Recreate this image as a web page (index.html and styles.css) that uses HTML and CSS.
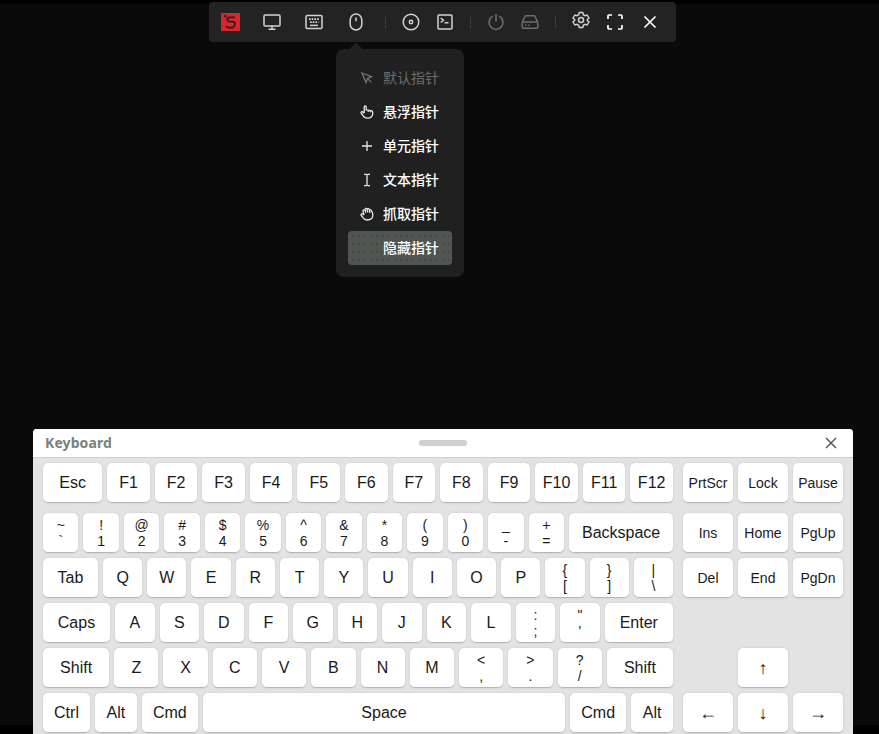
FILE: index.html
```
<!DOCTYPE html>
<html lang="zh">
<head>
<meta charset="utf-8">
<title>Keyboard</title>
<link rel="stylesheet" href="styles.css">
</head>
<body>
<div class="stage">
  <nav class="toolbar">
    <svg class="logo" viewBox="0 0 19 18"><path fill="#dc242c" d="M0 0h19v18H0z"/><path fill="none" stroke="#242424" stroke-width="1.9" d="M14 4.4H8.6Q6.4 4.4 6.4 6.3T8.6 8.6h3Q14 8.8 14 11t-2.4 3.6H7.4L5 13.4M3 2.6l2.4 1.2"/></svg>
    <svg class="ico i2" viewBox="0 0 18 18"><rect x="1" y="2" width="16" height="11" rx="1"/><path d="M9 13v3M5.5 16.2h7"/></svg>
    <svg class="ico i3" viewBox="0 0 18 18"><rect x="1" y="2.5" width="16" height="13" rx="1.2"/><path stroke-width="1.8" stroke-dasharray="1.7 1" d="M4 6.2h10.5M5 9.2h8.5"/><path d="M5 12.4h8"/></svg>
    <svg class="ico i4" viewBox="0 0 18 18"><rect x="3.2" y="1" width="11.6" height="16" rx="5.8"/><path d="M9 4.5v3.7"/></svg>
    <i class="sep s1"></i>
    <svg class="ico i5" viewBox="0 0 18 18"><circle cx="9" cy="9" r="7.8"/><circle cx="9" cy="9" r="1.7"/></svg>
    <svg class="ico i6" viewBox="0 0 18 18"><rect x="2" y="2" width="14" height="14" rx="1"/><path d="M4.7 5l2.7 2.3L4.7 9.5M8.5 9.8h4"/></svg>
    <i class="sep s2"></i>
    <svg class="ico i7 dim" viewBox="0 0 18 18"><path d="M5.8 3.2a7 7 0 1 0 6.4 0M9 1v7.5"/></svg>
    <svg class="ico i8 dim" viewBox="0 0 18 18"><path d="M1.2 9.2L4 3.5q.3-.7 1-.7h8q.7 0 1 .7l2.8 5.7M3 9h12q1.8 0 1.8 1.5V14q0 1.2-1.2 1.2H2.4Q1.2 15.2 1.2 14v-3.5Q1.2 9 3 9zM4 12.2h1.4M7 12.2h1.4"/></svg>
    <i class="sep s3"></i>
    <svg class="ico i9" viewBox="0 0 18 18"><path stroke-width="1.4" d="M7.2 1.5h3.6l.5 2.2 1.7 1 2.2-.7L17 7.1l-1.7 1.5v1L17 11l-1.8 3-2.2-.7-1.7 1-.5 2.2H7.2l-.5-2.2-1.7-1-2.2.7L1 11l1.7-1.5v-1L1 7.1 2.8 4l2.2.7 1.7-1z"/><circle cx="9" cy="9" r="2.5"/></svg>
    <svg class="ico i10 bright" viewBox="0 0 18 18"><path d="M2 6V3q0-1 1-1h3M12 2h3q1 0 1 1v3M16 12v3q0 1-1 1h-3M6 16H3q-1 0-1-1v-3"/></svg>
    <svg class="ico i11 bright" viewBox="0 0 18 18"><path d="M3.5 3.5l11 11M14.5 3.5l-11 11"/></svg>
  </nav>

  <div class="menu">
    <div class="item off"><svg class="mi" viewBox="0 0 14 14"><path d="M2 2l9.5 3.6-4 1.8L6 11.6zM7.6 7.6l3.8 3.8"/></svg><span>默认指针</span></div>
    <div class="item"><svg class="mi" viewBox="0 0 14 14"><path d="M4.2 8V2.2q0-1.2 1-1.2t1 1.2V5l4.8.6q1.8.3 1.8 1.8 0 5.8-5.2 5.8-3.3 0-4.5-2.4L1 7.8q.2-1.5 1.7-.9l1.5 1.4M8.3 5.3v1.8M10.5 5.6v1.7"/></svg><span>悬浮指针</span></div>
    <div class="item"><svg class="mi" viewBox="0 0 14 14"><path d="M2 7h10M7 2v10"/></svg><span>单元指针</span></div>
    <div class="item"><svg class="mi" viewBox="0 0 14 14"><path d="M4 1.4h2L7 2l1-.6h2M7 2v10M4 12.6h2L7 12l1 .6h2"/></svg><span>文本指针</span></div>
    <div class="item"><svg class="mi" viewBox="0 0 14 14"><path d="M4 8L3 4q0-1.3 1-1.2 1 0 1.2 1.2L5 2.5Q5.2 1 6.2 1.1q1 0 1 1.2 1.6-1.5 2.3.7 1.4-.9 1.9.8l1.2 2.4q1.3 6.6-5 6.8-3.4 0-5-2.8L1 8q0-1.6 1.6-1.2L4 8M5.2 3l.6 2.8M7.3 2.5l.5 3M9.5 3l.4 2.8"/></svg><span>抓取指针</span></div>
    <div class="item on"><i class="mi"></i><span>隐藏指针</span></div>
  </div>
</div>

<section class="panel">
  <header class="head">
    <span class="title">Keyboard</span>
    <i class="grip"></i>
    <svg class="close" viewBox="0 0 12 12"><path d="M1 1l10 10M11 1L1 11"/></svg>
  </header>
  <div class="keys">
    <div class="main">
      <div class="row fn"><b class="esc">Esc</b><b>F1</b><b>F2</b><b>F3</b><b>F4</b><b>F5</b><b>F6</b><b>F7</b><b>F8</b><b>F9</b><b>F10</b><b>F11</b><b>F12</b></div>
      <div class="row"><b class="two">~<br>`</b><b class="two">!<br>1</b><b class="two">@<br>2</b><b class="two">#<br>3</b><b class="two">$<br>4</b><b class="two">%<br>5</b><b class="two">^<br>6</b><b class="two">&amp;<br>7</b><b class="two">*<br>8</b><b class="two">(<br>9</b><b class="two">)<br>0</b><b class="two">_<br>-</b><b class="two">+<br>=</b><b class="back">Backspace</b></div>
      <div class="row"><b class="tab">Tab</b><b>Q</b><b>W</b><b>E</b><b>R</b><b>T</b><b>Y</b><b>U</b><b>I</b><b>O</b><b>P</b><b class="two">{<br>[</b><b class="two">}<br>]</b><b class="two">|<br>\</b></div>
      <div class="row"><b class="caps">Caps</b><b>A</b><b>S</b><b>D</b><b>F</b><b>G</b><b>H</b><b>J</b><b>K</b><b>L</b><b class="two">:<br>;</b><b class="two">"<br>'</b><b class="enter">Enter</b></div>
      <div class="row"><b class="shift">Shift</b><b>Z</b><b>X</b><b>C</b><b>V</b><b>B</b><b>N</b><b>M</b><b class="two">&lt;<br>,</b><b class="two">&gt;<br>.</b><b class="two">?<br>/</b><b class="shift">Shift</b></div>
      <div class="row"><b class="ctrl">Ctrl</b><b class="alt">Alt</b><b class="cmd">Cmd</b><b>Space</b><b class="cmd">Cmd</b><b class="alt">Alt</b></div>
    </div>
    <div class="side">
      <div class="row fn"><b>PrtScr</b><b>Lock</b><b>Pause</b></div>
      <div class="row"><b>Ins</b><b>Home</b><b>PgUp</b></div>
      <div class="row"><b>Del</b><b>End</b><b>PgDn</b></div>
      <div class="row"></div>
      <div class="row"><i></i><b class="arrow">↑</b><i></i></div>
      <div class="row"><b class="arrow">←</b><b class="arrow">↓</b><b class="arrow">→</b></div>
    </div>
  </div>
</section>
</body>
</html>
```
FILE: styles.css
```
* { box-sizing: border-box; }
html { background: #000; }
body {
  margin: 0;
  height: 734px;
  overflow: hidden;
  background: linear-gradient(#000 4px, #0a0a0a 4px, #0a0a0a 725px, #000 725px);
  font-family: "Liberation Sans", Arial, sans-serif;
}
.stage { height: 429px; padding-top: 2px; }

.toolbar {
  display: flex;
  align-items: center;
  width: 467px;
  height: 40px;
  margin-left: 209px;
  padding-left: 12px;
  background: #232323;
  border-radius: 4px;
}
.toolbar > * { flex: none; }
.logo { width: 19px; height: 18px; }
.ico {
  width: 18px;
  height: 18px;
  fill: none;
  stroke: #d2d4d3;
  stroke-width: 1.5;
}
.ico.dim { stroke: #6c706e; }
.ico.bright { stroke: #fff; stroke-width: 1.7; }
.i2 { margin-left: 23.4px; }
.i3, .i4 { margin-left: 24px; }
.s1 { margin-left: 20px; }
.i5, .i6, .i7, .i8 { margin-left: 16px; }
.s2, .s3 { margin-left: 16px; }
.i9 { margin: -4px 0 0 16px; }
.i10 { margin-left: 16px; }
.i11 { margin-left: 17px; }
.sep {
  width: 1px;
  height: 11px;
  background: repeating-linear-gradient(#555 0 1px, transparent 1px 2px);
}

.menu {
  position: relative;
  width: 128px;
  height: 228px;
  margin: 7px 0 0 336px;
  padding: 12px;
  background: #202020;
  border-radius: 8px;
}
.menu::before {
  content: "";
  position: absolute;
  top: -6px;
  left: 13px;
  border: 7px solid transparent;
  border-top: 0;
  border-bottom: 6px solid #202020;
}
.item {
  display: flex;
  align-items: center;
  height: 34px;
  padding-left: 12px;
  border-radius: 4px;
  color: #fff;
  font: 500 14px/32px "Noto Sans CJK SC", sans-serif;
}
.item span { height: 34px; }
.mi {
  width: 14px;
  height: 14px;
  margin-right: 9px;
  fill: none;
  stroke: #e8e8e8;
  stroke-width: 1.3;
}
.off { color: #6a6e6b; font-weight: 400; }
.off .mi { stroke: #747875; }
.on {
  background: radial-gradient(circle, #3a3e3b .5px, transparent .9px) 2px 1px / 6px 8px, #505552;
}

.panel {
  width: 820px;
  height: 305px;
  margin-left: 33px;
  overflow: hidden;
  background: #e3e3e3;
  border-radius: 4px 4px 0 0;
}
.head {
  display: grid;
  grid-template-columns: 1fr 48px 1fr;
  align-items: center;
  height: 29px;
  padding: 0 16px;
  background: #fff;
  border-bottom: 1px solid #cfcfcf;
}
.title { margin-left: -4px; color: #7b807d; font: 700 14px/28px "Noto Sans", sans-serif; letter-spacing: .1px; }
.grip { height: 6px; border-radius: 3px; background: #cecfce; }
.close {
  justify-self: end;
  width: 12px;
  height: 12px;
  fill: none;
  stroke: #555b57;
  stroke-width: 1.5;
}
.keys { display: flex; gap: 10px; padding: 5px 10px; }
.main { width: 630px; }
.side { width: 160px; }
.row { display: flex; gap: 5px; height: 40px; margin-bottom: 5px; }
.row.fn { margin-bottom: 10px; }
.row > * { flex: 1 1 0; min-width: 0; }
.row b {
  display: flex;
  align-items: center;
  justify-content: center;
  background: #fff;
  border-bottom: 1px solid #b5b5b5;
  border-radius: 5px;
  box-shadow: 0 0 3px -1px rgba(0, 0, 0, .3);
  color: #1a1a1a;
  font-size: 16px;
  font-weight: 400;
}
.row .two {
  display: block;
  padding-top: 4px;
  font-size: 14px;
  line-height: 16px;
  text-align: center;
}
.side .row b { font-size: 14px; padding-top: 1px; }
.side .row .arrow {
  padding-top: 1px;
  font: 18px "Liberation Serif", serif;
}
.row .esc { flex: 0 0 59.2px; }
.row .back { flex: 0 0 104px; }
.row .tab { flex: 0 0 55px; }
.row .caps { flex: 0 0 67px; }
.row .enter { flex: 0 0 68.3px; }
.row .shift { flex: 0 0 66.2px; }
.row .ctrl { flex: 0 0 47px; }
.row .alt { flex: 0 0 41.7px; }
.row .cmd { flex: 0 0 56.3px; }
```
